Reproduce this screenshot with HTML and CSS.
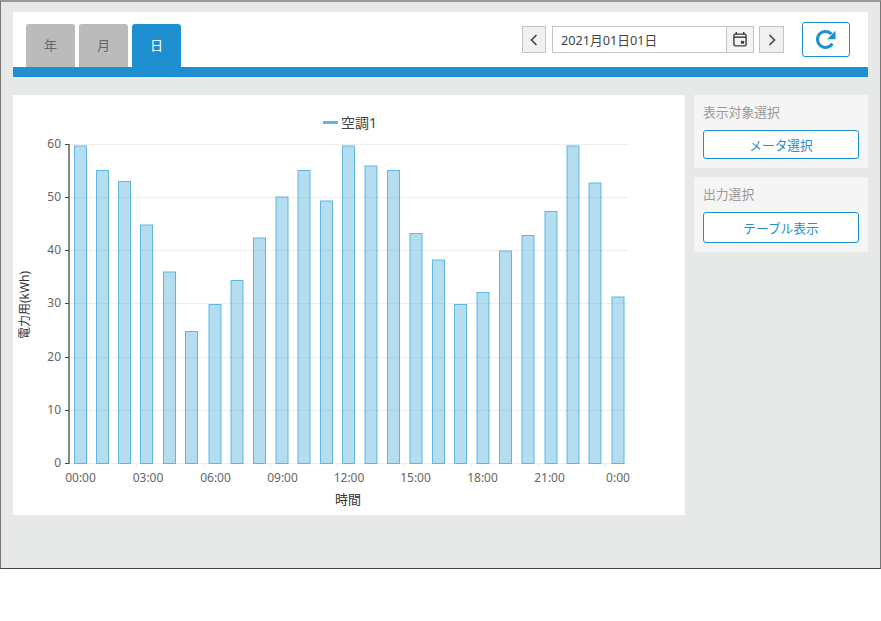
FILE: index.html
```html
<!DOCTYPE html>
<html lang="ja">
<head>
<meta charset="UTF-8">
<title>電力量</title>
<link rel="stylesheet" href="styles.css">
</head>
<body>
<div class="frame">
    <div class="header">
        <div class="tabs">
            <div class="tab">年</div>
            <div class="tab">月</div>
            <div class="tab active">日</div>
        </div>
        <div class="date-area">
            <button class="arrow">
                <svg width="8" height="12" viewBox="0 0 8 12"><path d="M6.5 1 1.5 6l5 5" fill="none" stroke="#444" stroke-width="1.6"/></svg>
            </button>
            <div class="date-box">
                <span class="date-text">2021月01日01日</span>
                <span class="date-icon">
                    <svg width="14" height="15" viewBox="0 0 15 16"><path d="M3.5 0v3M11.5 0v3" stroke="#3c4043" stroke-width="1.6"/><rect x="1" y="2.2" width="13" height="12.6" rx="1.2" fill="none" stroke="#3c4043" stroke-width="1.5"/><path d="M1 5.5h13" stroke="#3c4043" stroke-width="1.6"/><rect x="8.5" y="9.5" width="3.5" height="3" fill="#3c4043"/></svg>
                </span>
            </div>
            <button class="arrow">
                <svg width="8" height="12" viewBox="0 0 8 12"><path d="M1.5 1l5 5-5 5" fill="none" stroke="#444" stroke-width="1.6"/></svg>
            </button>
            <button class="refresh">
                <svg width="22" height="22" viewBox="0 0 22 22"><path d="M17.3 14.6A8 8 0 1 1 16.4 5" fill="none" stroke="#1e8fd0" stroke-width="3"/><path d="M20.5 1.8v8.4h-8.4z" fill="#1e8fd0"/></svg>
            </button>
        </div>
    </div>

    <div class="main">
        <div class="chart-card">
            <svg class="chart" width="672" height="420" viewBox="0 0 672 420">
                <!-- 目盛り線 -->
                <g stroke="#eeeeee" stroke-width="1">
                    <path d="M56 49.5H616M56 102.5H616M56 155.5H616M56 208.5H616M56 262.5H616M56 315.5H616M56 368.5H616"/>
                    <path d="M123.5 368.5v4M190.5 368.5v4M257.5 368.5v4M324.5 368.5v4M391.5 368.5v4M458.5 368.5v4M525.5 368.5v4M592.5 368.5v4"/>
                </g>
                <!-- 棒 -->
                <g class="bars">
                    <rect x="61.5" y="51" width="12" height="317.5"/>
                    <rect x="83.5" y="75.5" width="12" height="293"/>
                    <rect x="105.5" y="86.5" width="12" height="282"/>
                    <rect x="127.5" y="130" width="12" height="238.5"/>
                    <rect x="150.5" y="177" width="12" height="191.5"/>
                    <rect x="172.5" y="236.5" width="12" height="132"/>
                    <rect x="196" y="209.5" width="12" height="159"/>
                    <rect x="218" y="185.5" width="12" height="183"/>
                    <rect x="240.5" y="143" width="12" height="225.5"/>
                    <rect x="263" y="102" width="12" height="266.5"/>
                    <rect x="285" y="75.5" width="12" height="293"/>
                    <rect x="307.5" y="106" width="12" height="262.5"/>
                    <rect x="329.5" y="51" width="12" height="317.5"/>
                    <rect x="352" y="71" width="12" height="297.5"/>
                    <rect x="374.5" y="75.5" width="12" height="293"/>
                    <rect x="397" y="138.5" width="12" height="230"/>
                    <rect x="419.5" y="165" width="12" height="203.5"/>
                    <rect x="441.5" y="209.5" width="12" height="159"/>
                    <rect x="464" y="197.5" width="12" height="171"/>
                    <rect x="486.5" y="156" width="12" height="212.5"/>
                    <rect x="509" y="140.5" width="12" height="228"/>
                    <rect x="532" y="116.5" width="12" height="252"/>
                    <rect x="554" y="51" width="12" height="317.5"/>
                    <rect x="576" y="88" width="12" height="280.5"/>
                    <rect x="599" y="202" width="12" height="166.5"/>
                </g>
                <!-- 軸 -->
                <path d="M56 49v320" stroke="#888" stroke-width="2"/>
                <path d="M52 49.5h4M52 102.5h4M52 155.5h4M52 208.5h4M52 262.5h4M52 315.5h4M52 368.5h4" stroke="#444" stroke-width="1"/>
                <g class="tick y-tick">
                    <text x="48" y="53">60</text>
                    <text x="48" y="105.5">50</text>
                    <text x="48" y="159">40</text>
                    <text x="48" y="212">30</text>
                    <text x="48" y="265.5">20</text>
                    <text x="48" y="318.5">10</text>
                    <text x="48" y="372">0</text>
                </g>
                <g class="tick x-tick">
                    <text x="67.5" y="387">00:00</text>
                    <text x="135" y="387">03:00</text>
                    <text x="202.5" y="387">06:00</text>
                    <text x="269.5" y="387">09:00</text>
                    <text x="336" y="387">12:00</text>
                    <text x="402.5" y="387">15:00</text>
                    <text x="469.5" y="387">18:00</text>
                    <text x="536.5" y="387">21:00</text>
                    <text x="605" y="387">0:00</text>
                </g>
                <text class="axis-title" x="335" y="409" text-anchor="middle">時間</text>
                <text class="axis-title small" transform="translate(16 210) rotate(-90)" text-anchor="middle">電力用(kWh)</text>
                <!-- 凡例 -->
                <rect x="310" y="26" width="15" height="3" fill="#5fb7e0"/>
                <text class="legend" x="328" y="33">空調1</text>
            </svg>
        </div>
        <div class="side">
            <div class="panel">
                <div class="panel-title">表示対象選択</div>
                <button class="panel-btn">メータ選択</button>
            </div>
            <div class="panel">
                <div class="panel-title">出力選択</div>
                <button class="panel-btn tall">テーブル表示</button>
            </div>
        </div>
    </div>
</div>
</body>
</html>
```

FILE: styles.css
```css
body {
    margin: 0;
    background-color: #fff;
    font-family: "Noto Sans", "Noto Sans CJK JP", sans-serif;
}

.frame {
    box-sizing: border-box;
    height: 569px;
    padding: 10px 12px 0 12px;
    background-color: #e7e8e8;
    border-top: 2px solid #999;
    border-left: 1px solid #777;
    border-right: 1px solid #777;
    border-bottom: 1px solid #444;
}

/* ヘッダー */
.header {
    display: flex;
    justify-content: space-between;
    height: 55px;
    padding: 0 18px 0 13px;
    background-color: #fff;
    border-bottom: 10px solid #1e8fd0;
}

.tabs {
    display: flex;
    align-items: flex-end;
    gap: 4px;
}

.tab {
    width: 49px;
    height: 43px;
    line-height: 43px;
    text-align: center;
    font-size: 13px;
    color: #666;
    background-color: #bbbbbc;
    border-radius: 3px 3px 0 0;
}

.tab.active {
    color: #fff;
    background-color: #1e8fd0;
}

.date-area {
    display: flex;
    align-items: flex-start;
    padding-top: 14px;
}

.arrow {
    display: flex;
    align-items: center;
    justify-content: center;
    box-sizing: border-box;
    width: 25px;
    height: 27px;
    padding: 0;
    background-color: #f0f0f0;
    border: 1px solid #c4c4c4;
}

.arrow:first-child {
    width: 24px;
}

.date-box {
    display: flex;
    box-sizing: border-box;
    width: 202px;
    height: 27px;
    margin: 0 5px 0 6px;
    border: 1px solid #c4c4c4;
}

.date-text {
    flex: 1;
    padding-left: 8px;
    font-size: 12.7px;
    line-height: 26px;
    color: #444;
}

.date-icon {
    display: flex;
    align-items: center;
    justify-content: center;
    width: 26px;
    background-color: #f3f3f3;
    border-left: 1px solid #c4c4c4;
}

.refresh {
    display: flex;
    align-items: center;
    justify-content: center;
    box-sizing: border-box;
    width: 48px;
    height: 35px;
    margin: -4px 0 0 18px;
    padding: 0;
    background-color: #fff;
    border: 1px solid #1e8fd0;
    border-radius: 3px;
}

/* メイン */
.main {
    display: flex;
    gap: 9px;
    margin-top: 18px;
}

.chart-card {
    width: 672px;
    height: 420px;
    background-color: #fff;
}

.chart {
    display: block;
}

.bars rect {
    fill: #5fb7e0;
    fill-opacity: 0.47;
    stroke: #5fb7e0;
    stroke-width: 1;
}

.tick text {
    font-size: 12px;
    fill: #666;
}

.y-tick text {
    text-anchor: end;
}

.x-tick text {
    text-anchor: middle;
}

.axis-title {
    font-size: 13px;
    fill: #333;
}

.axis-title.small {
    font-size: 12px;
}

.legend {
    font-size: 14px;
    fill: #444;
}

/* サイドパネル */
.side {
    display: flex;
    flex-direction: column;
    gap: 9px;
    width: 174px;
}

.panel {
    padding: 8px 9px 9px 9px;
    background-color: #f5f5f5;
}

.panel-title {
    height: 19px;
    margin-bottom: 8px;
    font-size: 12.8px;
    line-height: 19px;
    color: #999;
}

.panel-btn {
    display: block;
    box-sizing: border-box;
    width: 100%;
    height: 29px;
    padding: 0;
    font-family: inherit;
    font-size: 12.7px;
    color: #1e8fd0;
    background-color: #fff;
    border: 1px solid #1e8fd0;
    border-radius: 3px;
}

.panel-btn.tall {
    height: 31px;
}
```
